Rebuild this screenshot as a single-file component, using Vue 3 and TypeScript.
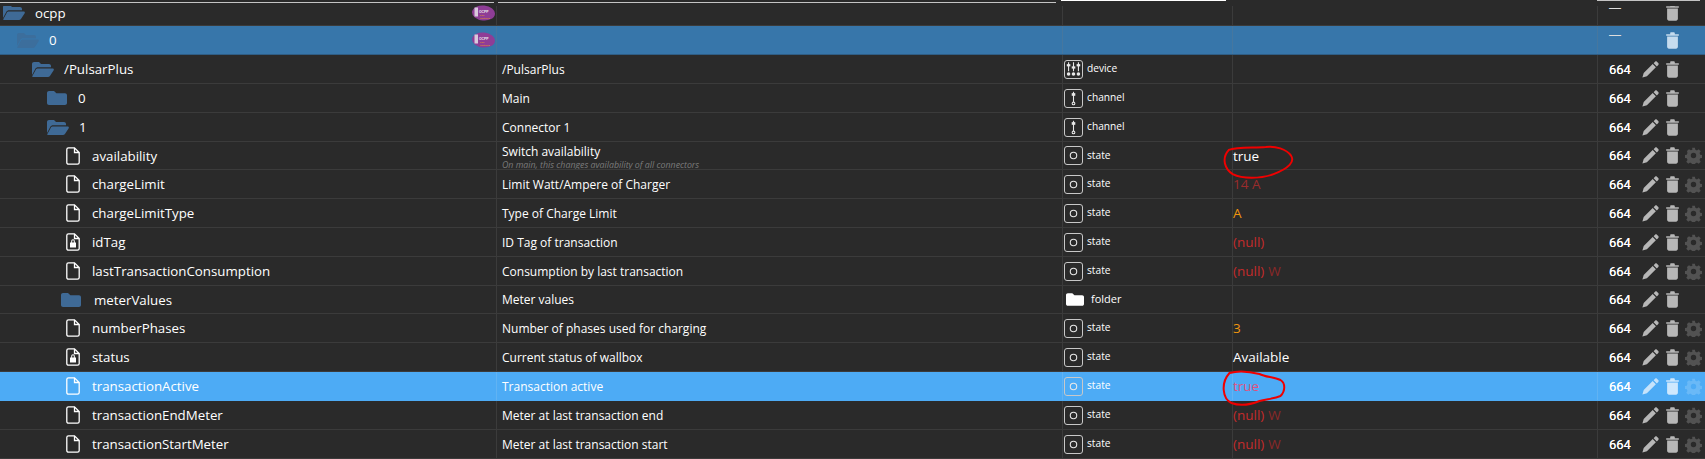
<script setup lang="ts">
interface Row {
  h: number
  depth: number
  name: string
  icon: 'open' | 'closed' | 'file' | 'lock'
  desc?: string
  sub?: string
  role?: 'device' | 'channel' | 'state' | 'folder'
  val?: string
  unit?: string
  tone?: string
  mode?: string
  gear?: boolean
  sel?: string
  logo?: boolean
  circled?: string
}
const rows: Row[] = [
  { h: 26, depth: 0, name: 'ocpp', icon: 'open', mode: '—', logo: true },
  { h: 29, depth: 1, name: '0', icon: 'open', mode: '—', logo: true, sel: 'dim' },
  { h: 29, depth: 2, name: '/PulsarPlus', icon: 'open', desc: '/PulsarPlus', role: 'device', mode: '664' },
  { h: 29, depth: 3, name: '0', icon: 'closed', desc: 'Main', role: 'channel', mode: '664' },
  { h: 29, depth: 3, name: '1', icon: 'open', desc: 'Connector 1', role: 'channel', mode: '664' },
  { h: 28, depth: 4, name: 'availability', icon: 'file', desc: 'Switch availability', sub: 'On main, this changes availability of all connectors', role: 'state', val: 'true', tone: 'white', mode: '664', gear: true, circled: 'a' },
  { h: 29, depth: 4, name: 'chargeLimit', icon: 'file', desc: 'Limit Watt/Ampere of Charger', role: 'state', val: '14 A', tone: 'dark', mode: '664', gear: true },
  { h: 29, depth: 4, name: 'chargeLimitType', icon: 'file', desc: 'Type of Charge Limit', role: 'state', val: 'A', tone: 'orange', mode: '664', gear: true },
  { h: 29, depth: 4, name: 'idTag', icon: 'lock', desc: 'ID Tag of transaction', role: 'state', val: '(null)', tone: 'red', mode: '664', gear: true },
  { h: 29, depth: 4, name: 'lastTransactionConsumption', icon: 'file', desc: 'Consumption by last transaction', role: 'state', val: '(null)', unit: 'W', tone: 'red', mode: '664', gear: true },
  { h: 28, depth: 4, name: 'meterValues', icon: 'closed', desc: 'Meter values', role: 'folder', mode: '664' },
  { h: 29, depth: 4, name: 'numberPhases', icon: 'file', desc: 'Number of phases used for charging', role: 'state', val: '3', tone: 'orange', mode: '664', gear: true },
  { h: 29, depth: 4, name: 'status', icon: 'lock', desc: 'Current status of wallbox', role: 'state', val: 'Available', tone: 'white', mode: '664', gear: true },
  { h: 29, depth: 4, name: 'transactionActive', icon: 'file', desc: 'Transaction active', role: 'state', val: 'true', tone: 'pink', mode: '664', gear: true, sel: 'bright', circled: 'b' },
  { h: 29, depth: 4, name: 'transactionEndMeter', icon: 'file', desc: 'Meter at last transaction end', role: 'state', val: '(null)', unit: 'W', tone: 'red', mode: '664', gear: true },
  { h: 29, depth: 4, name: 'transactionStartMeter', icon: 'file', desc: 'Meter at last transaction start', role: 'state', val: '(null)', unit: 'W', tone: 'red', mode: '664', gear: true },
]
const indent = (r: Row) => ({ paddingLeft: `${r.depth === 0 ? 3 : 2 + r.depth * 15}px` })
const height = (r: Row) => ({ height: `${r.h}px` })
</script>

<template>
  <div class="page">
    <div class="rules">
      <i class="r1"></i><i class="r2"></i><i class="r3"></i><i class="r4"></i>
    </div>
    <div v-for="(r, i) in rows" :key="i" class="row" :class="r.sel" :style="height(r)">
      <div class="cell name" :style="indent(r)">
        <svg v-if="r.icon === 'open'" class="fold" viewBox="0 0 22 15"><path d="M0 13V2C0 .9.900 0 2 0h5l2 2h8c1.100 0 2 .9 2 2v1.200H6c-1.100 0-2 .5-2.600 1.500Z"/><path d="M5.300 6.400H20.600c1 0 1.600.9 1.100 1.800l-3.600 5.600c-.5.800-1.300 1.200-2.200 1.200H1c-.6 0-.9-.5-.6-1l3.800-6.900c.3-.4.700-.7 1.100-.7Z"/></svg>
        <svg v-else-if="r.icon === 'closed'" class="shut" :class="{ deep: r.depth === 4 }" viewBox="0 0 20 14"><path d="M0 2C0 .9.900 0 2 0h5l2.400 2.200H18c1.100 0 2 .9 2 2V12c0 1.100-.9 2-2 2H2c-1.100 0-2-.9-2-2Z"/></svg>
        <svg v-else class="doc" viewBox="0 0 14 18">
          <path d="M2.500.8h6l4.700 4.700v10c0 1-.8 1.700-1.700 1.700h-9c-1 0-1.700-.7-1.700-1.700V2.500C.8 1.600 1.600.8 2.500.8Z M8.500 1v4.500h4.500" />
          <path v-if="r.icon === 'lock'" class="padlock" d="M4 9.500h6v5H4Z M5.200 9.500V8a1.800 1.800 0 0 1 3.600 0v1.500h-1V8a.8.8 0 0 0-1.600 0v1.500Z" />
        </svg>
        <span class="label" :class="r.icon">{{ r.name }}</span>
        <svg v-if="r.logo" class="logo" viewBox="0 0 23 16">
          <ellipse cx="11.500" cy="8" rx="11.500" ry="7.500" fill="#8e3d96" transform="rotate(6 11.500 8)" />
          <rect x="2.500" y="2.500" width="3.500" height="9" fill="#d8c9dc" />
          <text x="7" y="7.500" class="logo-a">OCPP</text>
          <text x="8" y="10.500" class="logo-b">Full</text>
          <text x="8" y="13.800" class="logo-b">Certified</text>
        </svg>
      </div>
      <div class="cell desc" :class="{ twoline: r.sub }">
        <span>{{ r.desc }}</span>
        <small v-if="r.sub">{{ r.sub }}</small>
      </div>
      <div class="cell role">
        <span v-if="r.role === 'folder'" class="role-folder">
          <svg viewBox="0 0 20 14"><path d="M0 2C0 .9.900 0 2 0h5l2.400 2.200H18c1.100 0 2 .9 2 2V12c0 1.100-.9 2-2 2H2c-1.100 0-2-.9-2-2Z" fill="#fff"/></svg>
        </span>
        <span v-else-if="r.role" class="role-box">
          <svg viewBox="0 0 19 19">
            <template v-if="r.role === 'state'"><circle cx="9.500" cy="9.500" r="3.600" /></template>
            <template v-else-if="r.role === 'channel'">
              <path d="M9.500 2v12" /><rect x="7.500" y="3.500" width="4" height="3" class="solid" /><circle cx="9.500" cy="15" r="1.500" />
            </template>
            <template v-else>
              <path d="M4 1.500v10M9.500 1.500v10M15 1.500v10" />
              <rect x="2" y="3.500" width="4" height="2.500" class="solid" /><rect x="7.500" y="6" width="4" height="2.500" class="solid" /><rect x="13" y="3.500" width="4" height="2.500" class="solid" />
              <circle cx="4" cy="14.500" r="2" class="solid" /><circle cx="9.500" cy="14.500" r="2" class="solid" /><circle cx="15" cy="14.500" r="2" class="solid" />
            </template>
          </svg>
        </span>
        <span v-if="r.role" class="role-text" :class="{ wide: r.role === 'folder' }">{{ r.role }}</span>
      </div>
      <div class="cell value">
        <span v-if="r.val" :class="r.tone">{{ r.val }}<em v-if="r.unit">{{ r.unit }}</em></span>
        <svg v-if="r.circled === 'a'" class="ring ring-a" viewBox="-1 -1 75 36"><path d="M6 5C14 2 30 3 44 2C54 1 65 4 70 11C74 17 68 24 52 30C38 35 20 35 10 30C2 25-2 14 6 5Z"/></svg>
        <svg v-if="r.circled === 'b'" class="ring ring-b" viewBox="-1 -1 65 38"><path d="M8 4C18 1 30 3 38 5C44 8 52 8 59 11C64 14 64 22 59 27C52 30 44 30 38 32C28 36 18 37 10 34C1 30-1 14 8 4Z"/></svg>
      </div>
      <div class="cell actions">
        <span class="mode" :class="{ dash: r.mode === '—' }">{{ r.mode }}</span>
        <svg class="act pen" :class="{ off: r.mode === '—' }" viewBox="0 0 18 18"><path d="M11.300 3.300 14.700 6.700 5.200 16.200 .4 17.600 1.800 12.800Z M12.300 2.300 13.800.8c.6-.6 1.500-.6 2 0l1.400 1.400c.6.6.6 1.500 0 2L15.700 5.700Z"/></svg>
        <svg class="act bin" viewBox="0 0 14 18"><path d="M.2 2.200h4.300V1.200C4.500.6 5 .2 5.500.2h3c.6 0 1 .4 1 1v1h4.300v1.600H.2Z M1.200 4.800h11.600v11c0 1.100-.9 2-2 2H3.200c-1.100 0-2-.9-2-2Z"/></svg>
        <svg v-if="r.gear" class="act gear" viewBox="0 0 24 24"><path fill-rule="evenodd" d="M10 1h4l.6 3a8 8 0 0 1 2.200.9l2.600-1.700 2.800 2.800-1.700 2.600a8 8 0 0 1 .9 2.200l3 .6v4l-3 .6a8 8 0 0 1-.9 2.200l1.700 2.600-2.800 2.800-2.600-1.700a8 8 0 0 1-2.200.9l-.6 3h-4l-.6-3a8 8 0 0 1-2.200-.9l-2.600 1.700-2.800-2.800 1.700-2.600a8 8 0 0 1-.9-2.200l-3-.6v-4l3-.6a8 8 0 0 1 .9-2.200L2.800 5.800 5.600 3l2.600 1.700a8 8 0 0 1 2.200-.9ZM12 8.200a3.800 3.800 0 1 0 0 7.600 3.800 3.800 0 0 0 0-7.600Z"/></svg>
      </div>
    </div>
  </div>
</template>

<style scoped>
.page {
  width: 1705px;
  height: 459px;
  overflow: hidden;
  position: relative;
  background: #2a2a2a;
  font-family: "Open Sans", "Noto Sans", sans-serif;
  color: #fff;
}
.rules { position: absolute; left: 0; right: 0; top: 0; height: 6px; z-index: 2; background: #2a2a2a; }
.rules i { position: absolute; top: 2px; height: 1px; background: #c4c4c4; }
.r1 { left: 0; width: 494px; }
.r2 { left: 498px; width: 558px; }
.r3 { left: 1061px; width: 165px; top: 0 !important; background: #fff !important; }
.r4 { left: 1597px; width: 103px; top: 0 !important; }
.row {
  display: grid;
  grid-template-columns: 497px 566px 170px 365px 107px;
  box-sizing: border-box;
  border-bottom: 1px solid #3b3b3b;
}
.row.dim { background: #3776aa; border-bottom-color: #2f5d84; }
.row.bright { background: #4dabf5; border-bottom-color: #4dabf5; }
.cell {
  display: flex;
  align-items: center;
  min-width: 0;
  box-sizing: border-box;
  border-right: 1px solid #3b3b3b;
  font-size: 13px;
  white-space: nowrap;
}
.dim .cell { border-right-color: #46779f; }
.bright .cell { border-right-color: #61b3f3; }
.actions { border-right: 0; padding-left: 11px; }
.name { position: relative; }
.fold { width: 22px; height: 15px; flex: none; fill: #3f6a96; }
.dim .fold { fill: #3c6e9c; }
.shut { width: 20px; height: 14px; flex: none; fill: #3f6a96; }
.shut.deep { margin-left: -1px; margin-right: 2px; }
.doc { width: 14px; height: 18px; flex: none; margin-left: 4px; fill: none; stroke: #fff; stroke-width: 1.300; }
.padlock { fill: #fff; stroke: none; }
.label { margin-left: 12px; font-size: 13.300px; }
.label.open { margin-left: 10px; }
.label.closed { margin-left: 11px; }
.logo { position: absolute; left: 472px; top: 50%; width: 23px; height: 16px; transform: translateY(-50%); z-index: 3; }
.logo-a { font: 700 3.300px "Liberation Sans", sans-serif; fill: #eee; }
.logo-b { font: 700 2.400px "Liberation Sans", sans-serif; fill: #e0952d; }
.desc { flex-direction: column; align-items: flex-start; justify-content: center; padding-left: 5px; font-size: 12px; overflow: hidden; }
.desc span { line-height: 15px; }
.desc.twoline { justify-content: flex-start; padding-top: 2px; }
.desc small { font-size: 8.800px; font-style: italic; color: #7c7c7c; line-height: 9px; margin-top: 2px; }
.role { padding-left: 1px; }
.role-box { width: 19px; height: 19px; box-sizing: border-box; flex: none; border: 1px solid #c8c8c8; border-radius: 3px; display: flex; }
.role-box svg { width: 100%; height: 100%; fill: none; stroke: #e8e8e8; stroke-width: 1.200; }
.role-box .solid { fill: #e8e8e8; stroke: none; }
.role-folder { margin-left: 2px; width: 18px; height: 13px; display: flex; flex: none; }
.role-folder svg { width: 100%; height: 100%; }
.role-text { margin-left: 4px; font-size: 10.200px; position: relative; top: -1px; }
.role-text.wide { margin-left: 7px; font-size: 11px; }
.value { position: relative; font-size: 13.500px; }
.value em { font-style: normal; color: #8a2828; margin-left: 4px; }
.white { color: #fff; }
.dark { color: #9a2c2c; }
.orange { color: #f0960e; }
.red { color: #c42b2b; }
.pink { color: #e0507f; }
.ring { position: absolute; z-index: 3; fill: none; stroke: #f00000; stroke-width: 2; overflow: visible; }
.ring-a { left: -12px; top: 2px; width: 75px; height: 35px; }
.ring-b { left: -13px; top: -4px; width: 66px; height: 38px; }
.mode { width: 33px; flex: none; font: 400 13px Roboto, "Liberation Sans", sans-serif; text-shadow: 0 0 .4px #fff; }
.mode.dash { font: 400 12px "Liberation Sans", sans-serif; text-shadow: none; color: #ddd; position: relative; top: -5px; }
.act { flex: none; fill: #b7b7b7; }
.pen { width: 17px; height: 17px; }
.pen.off { visibility: hidden; }
.bin { width: 13px; height: 17px; margin-left: 7px; }
.gear { width: 17px; height: 17px; margin-left: 6px; fill: #525252; }
.dim .bin { fill: #c6dcee; }
.bright .pen { fill: #c6e3fb; }
.bright .bin { fill: #cfe8fd; }
.bright .gear { fill: #6ab9f7; }
</style>
